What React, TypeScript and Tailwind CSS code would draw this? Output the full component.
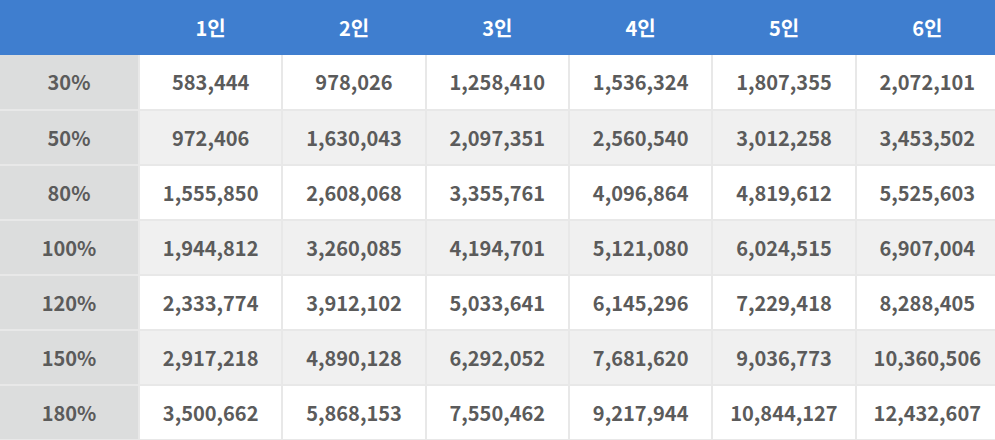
const HEAD = ["1인", "2인", "3인", "4인", "5인", "6인"]

const ROWS: [string, string[]][] = [
  ["30%", ["583,444", "978,026", "1,258,410", "1,536,324", "1,807,355", "2,072,101"]],
  ["50%", ["972,406", "1,630,043", "2,097,351", "2,560,540", "3,012,258", "3,453,502"]],
  ["80%", ["1,555,850", "2,608,068", "3,355,761", "4,096,864", "4,819,612", "5,525,603"]],
  ["100%", ["1,944,812", "3,260,085", "4,194,701", "5,121,080", "6,024,515", "6,907,004"]],
  ["120%", ["2,333,774", "3,912,102", "5,033,641", "6,145,296", "7,229,418", "8,288,405"]],
  ["150%", ["2,917,218", "4,890,128", "6,292,052", "7,681,620", "9,036,773", "10,360,506"]],
  ["180%", ["3,500,662", "5,868,153", "7,550,462", "9,217,944", "10,844,127", "12,432,607"]],
]

export default function App() {
  return (
    <div className="w-[995px] h-[440px] overflow-hidden bg-white font-['Noto_Sans_CJK_KR','Noto_Sans',sans-serif] font-bold text-[20px]">
      <table className="w-[1000px] border-collapse table-fixed">
        <colgroup>
          <col className="w-[139px]" />
          {HEAD.map((h) => (
            <col key={h} />
          ))}
        </colgroup>
        <thead>
          <tr className="h-[55px] bg-[#3f7ecf] text-white">
            <th />
            {HEAD.map((h) => (
              <th key={h} className="font-bold">
                {h}
              </th>
            ))}
          </tr>
        </thead>
        <tbody>
          {ROWS.map(([pct, vals], i) => (
            <tr key={pct} className={`h-[55px] text-[#5b5b5b] ${i % 2 ? "bg-[#f0f0f0]" : "bg-white"}`}>
              <td className="text-center bg-[#dcdddd] border-y-2 border-r-2 border-[#e8e8e8] first:border-t-0">{pct}</td>
              {vals.map((v, j) => (
                <td key={j} className="text-center border-2 border-[#e8e8e8] border-t-0">
                  {v}
                </td>
              ))}
            </tr>
          ))}
        </tbody>
      </table>
    </div>
  )
}
